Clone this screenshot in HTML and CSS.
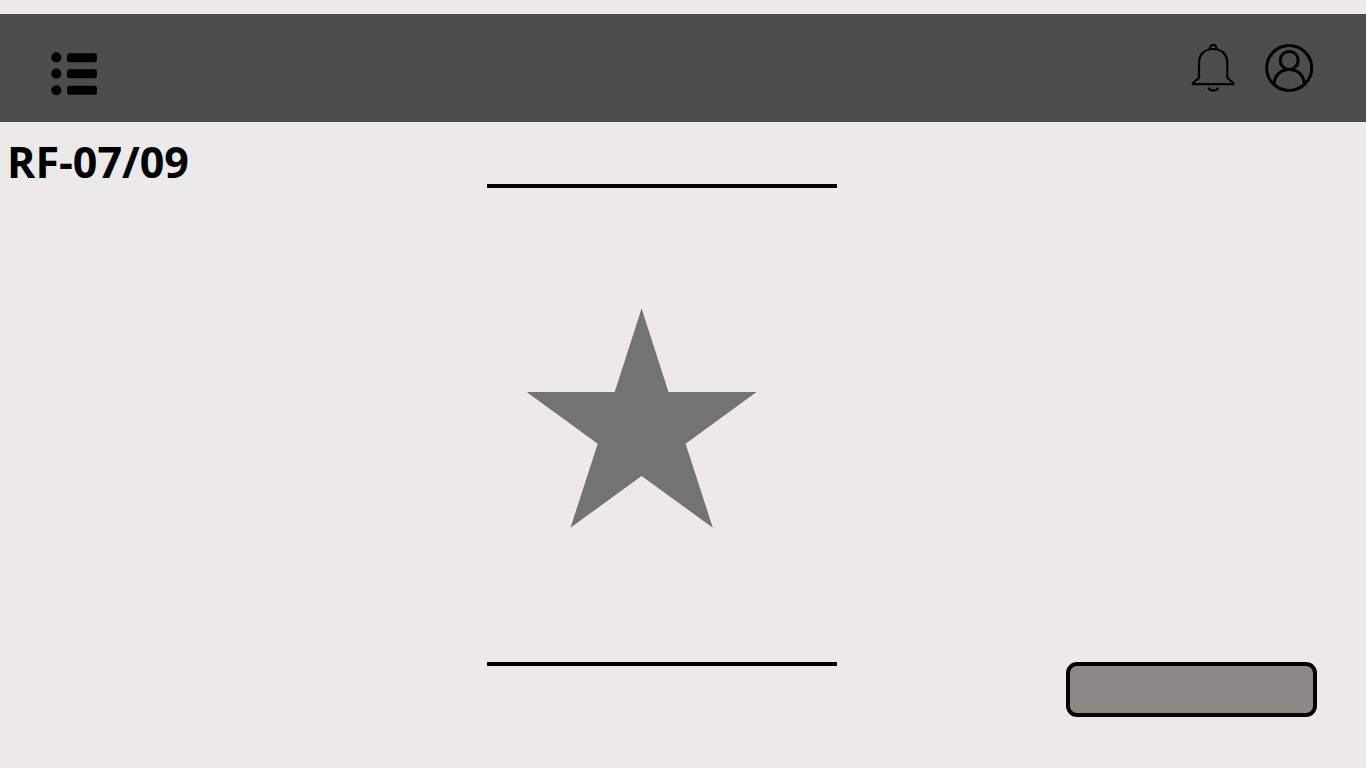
FILE: index.html
```html
<!DOCTYPE html>
<html lang="en">
<head>
<meta charset="utf-8">
<meta name="viewport" content="width=device-width, initial-scale=1">
<title>RF-07/09</title>
<link rel="stylesheet" href="styles.css">
</head>
<body>
<header class="topbar">
  <button class="icon-button menu" type="button" aria-label="Menu">
    <svg width="48" height="44" viewBox="0 0 48 44">
      <circle cx="5.3" cy="5.4" r="5.1"/><circle cx="5.3" cy="21.7" r="5.1"/><circle cx="5.3" cy="38.2" r="5"/>
      <rect x="16" y="1.3" width="30" height="9" rx="2.8"/><rect x="16" y="17.3" width="30" height="9" rx="2.8"/><rect x="16" y="33.7" width="30" height="9" rx="2.8"/>
    </svg>
  </button>
  <div class="actions">
    <button class="icon-button" type="button" aria-label="Notifications">
      <svg class="line-icon" width="44" height="50" viewBox="0 0 44 50" stroke-width="2.2">
        <path d="M19 6.500V5a3.200 3.200 0 0 1 6.400 0v1.500"/>
        <path d="M2 41.200v-1.300L8 34.800V20C8 11 14 6 22.200 6S36.300 11 36.300 20v14.800l6 5.100v1.300Z"/>
        <path d="M17.300 44.700c1.600 4 8.200 4 9.800 0"/>
      </svg>
    </button>
    <button class="icon-button" type="button" aria-label="Profile">
      <svg class="line-icon" width="50" height="50" viewBox="0 0 50 50" stroke-width="3">
        <circle cx="25.200" cy="25" r="22.500"/>
        <circle cx="25.200" cy="17.400" r="9"/>
        <path d="M10 41.500C10.300 32.500 16.500 26.400 25.200 26.400S40.100 32.500 40.400 41.500"/>
      </svg>
    </button>
  </div>
</header>
<main class="content">
  <h1 class="title">RF-07/09</h1>
  <section class="panel">
    <svg class="star" width="230" height="220" viewBox="0 0 230 220" role="img" aria-label="Star">
      <path d="M114.600 .500 141.500 84H229.500L158.600 135.700 185.800 219.700 114.600 168 43.500 219.700 70.700 135.700-.500 84H87.700Z"/>
    </svg>
  </section>
  <button class="action" type="button" aria-label="Continue"></button>
</main>
</body>
</html>
```
FILE: styles.css
```css
* {
  box-sizing: border-box;
}

body {
  display: flex;
  flex-direction: column;
  min-height: 100vh;
  margin: 0;
  padding-top: 14px;
  background: #ebe9e9;
  color: #000;
  font-family: "Open Sans", "Noto Sans", sans-serif;
}

.topbar {
  display: flex;
  align-items: center;
  justify-content: space-between;
  padding: 26px 52px 26px 51px;
  background: #4d4d4d;
}

.icon-button {
  display: block;
  padding: 0;
  border: 0;
  background: none;
  cursor: pointer;
}

.icon-button svg {
  display: block;
}

.menu {
  padding-top: 12px;
}

.actions {
  display: flex;
  gap: 29px;
}

.line-icon {
  fill: none;
  stroke: #000;
}

.content {
  display: grid;
  flex: 1;
  grid-template-columns: 1fr 350px 1fr;
  padding: 0 49px 0 7px;
}

.title {
  margin: 10px 0 0;
  font-size: 43px;
  font-weight: 700;
  line-height: 60px;
}

.panel {
  display: flex;
  align-items: center;
  margin: 62px 0 102px;
  padding: 0 40px 14px;
  border-top: 4px solid #000;
  border-bottom: 4px solid #000;
}

.star {
  fill: #737373;
}

.action {
  align-self: end;
  justify-self: end;
  width: 251px;
  height: 55px;
  margin-bottom: 51px;
  border: 4px solid #000;
  border-radius: 11px;
  background: #8d8886;
  cursor: pointer;
}
```
